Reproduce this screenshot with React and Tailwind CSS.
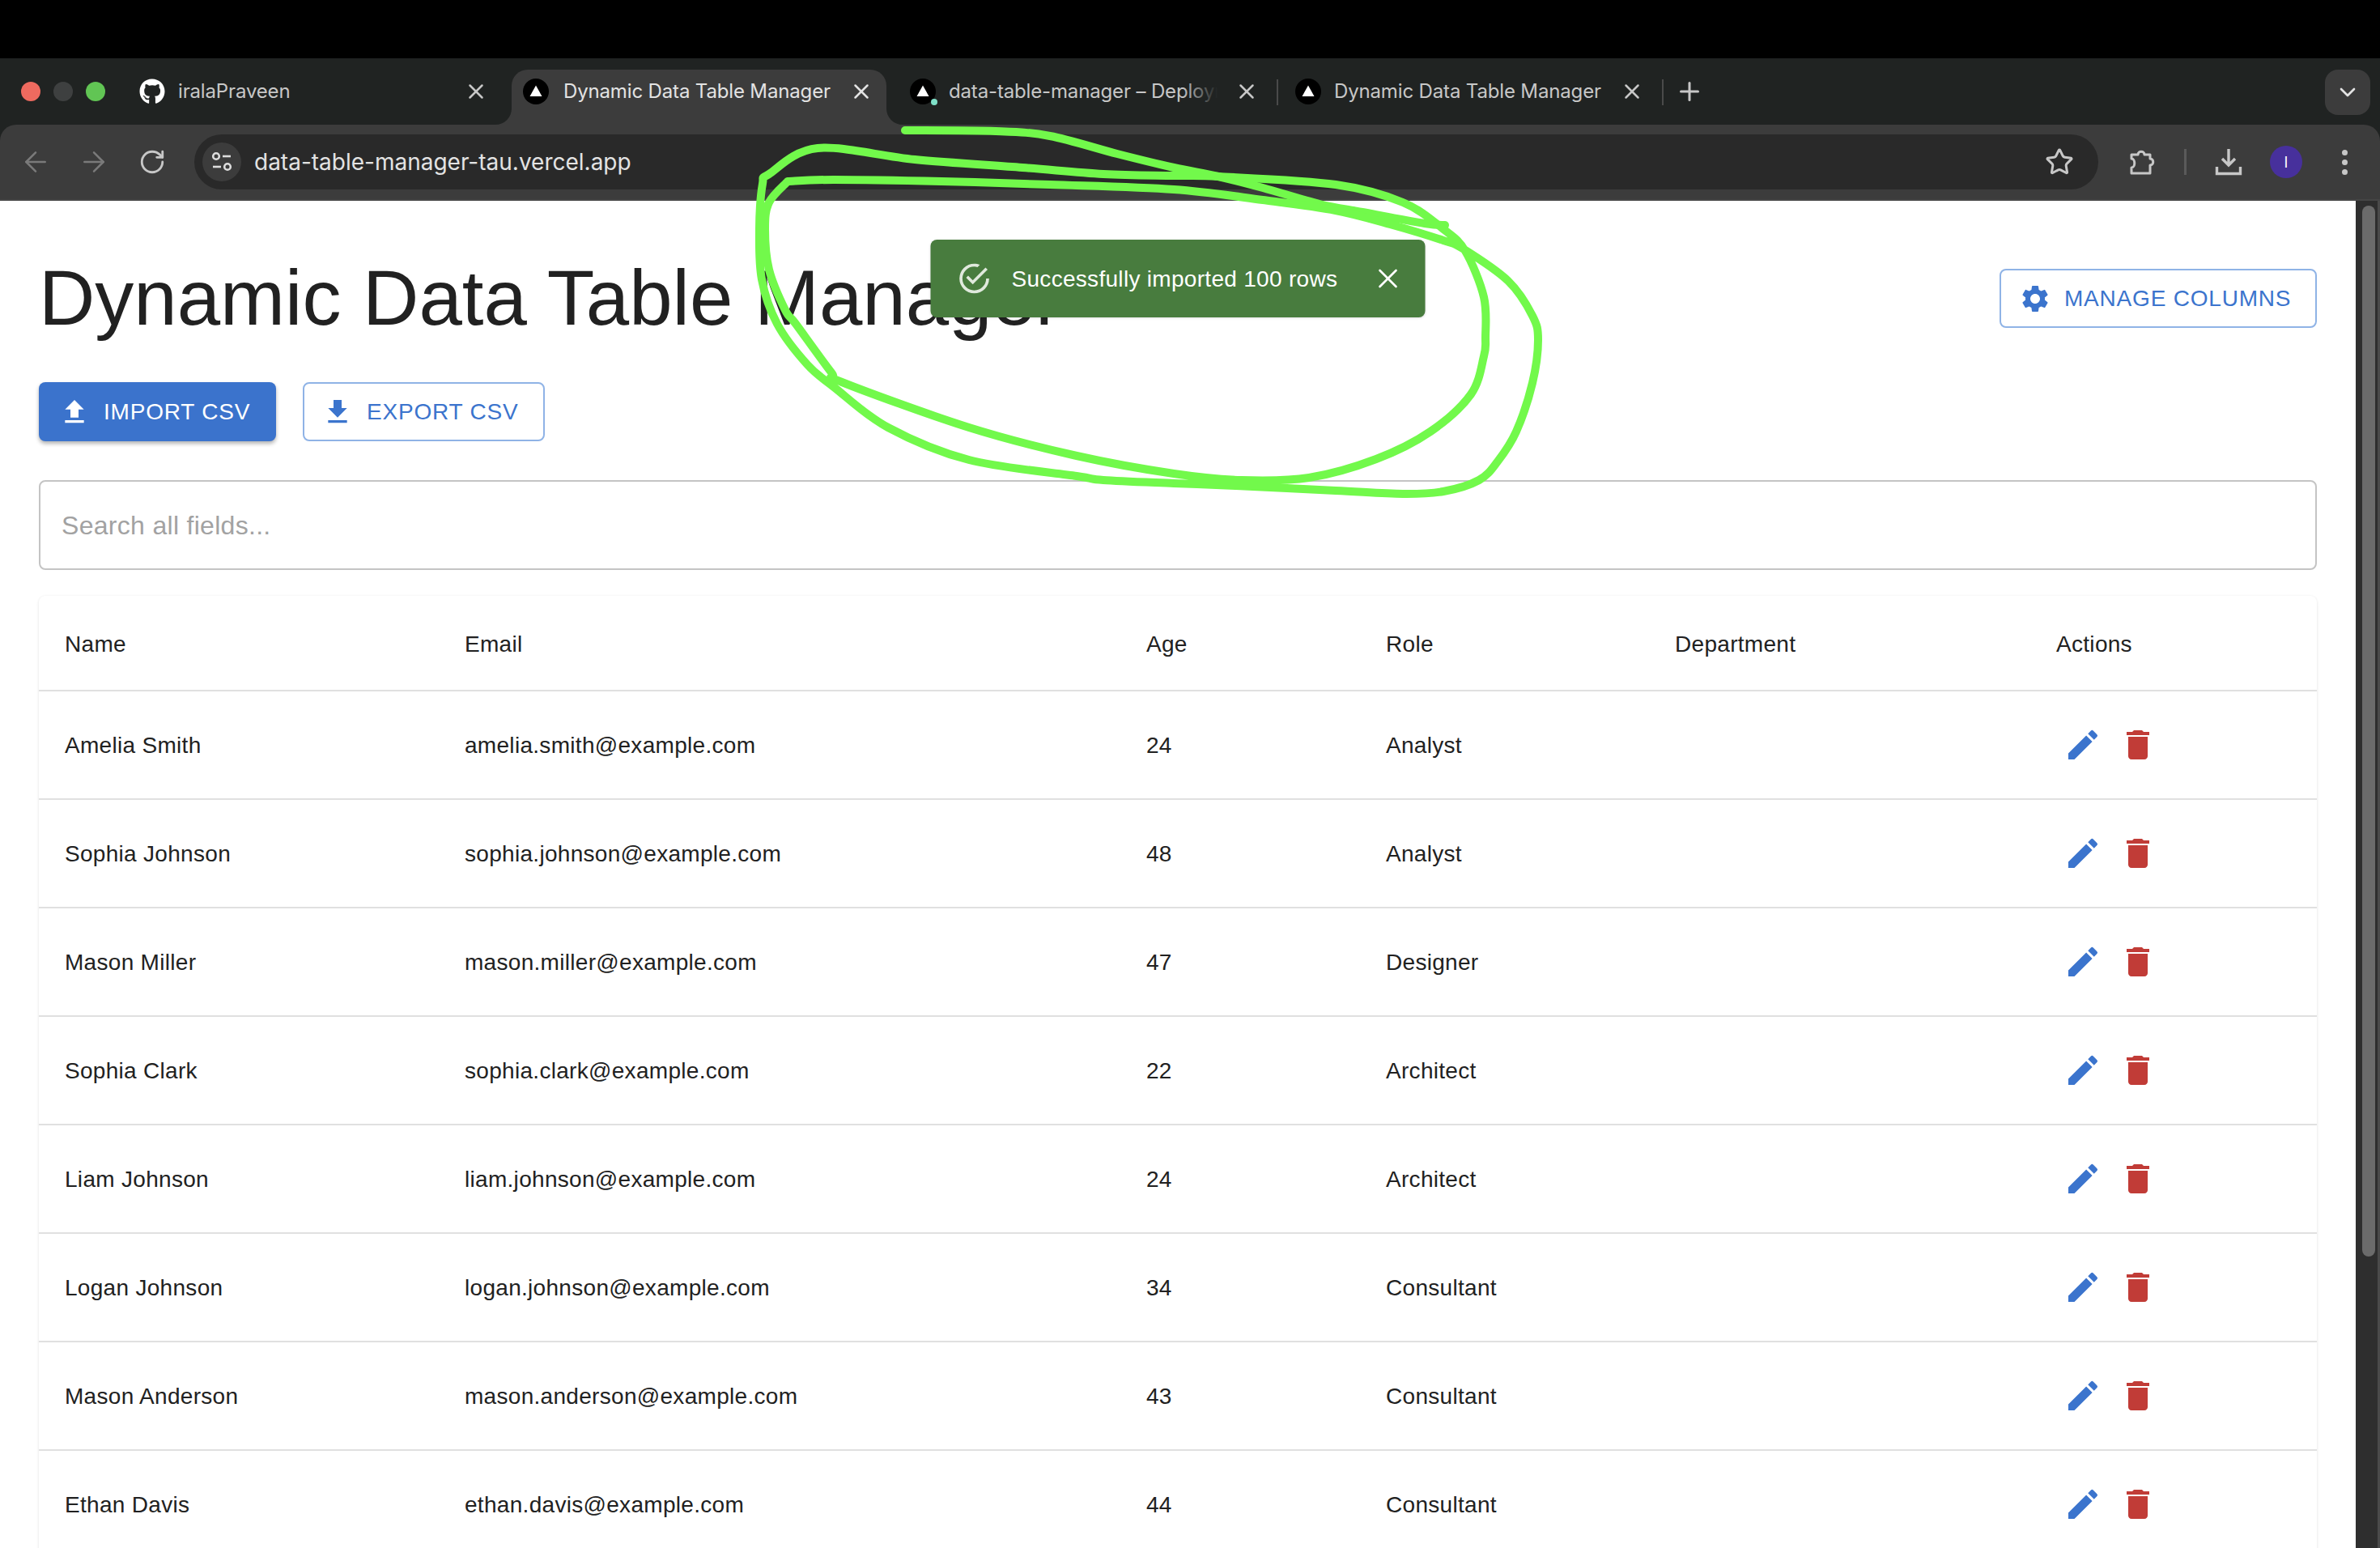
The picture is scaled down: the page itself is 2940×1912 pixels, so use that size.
import { ArrowLeft, ArrowRight, RotateCw, Star, ChevronDown, Plus, X } from "lucide-react";
import { FaGithub } from "react-icons/fa";
import { MdDelete, MdEdit, MdFileDownload, MdFileUpload, MdSettings } from "react-icons/md";

const rows = [
  ["Amelia Smith", "amelia.smith@example.com", "24", "Analyst"],
  ["Sophia Johnson", "sophia.johnson@example.com", "48", "Analyst"],
  ["Mason Miller", "mason.miller@example.com", "47", "Designer"],
  ["Sophia Clark", "sophia.clark@example.com", "22", "Architect"],
  ["Liam Johnson", "liam.johnson@example.com", "24", "Architect"],
  ["Logan Johnson", "logan.johnson@example.com", "34", "Consultant"],
  ["Mason Anderson", "mason.anderson@example.com", "43", "Consultant"],
  ["Ethan Davis", "ethan.davis@example.com", "44", "Consultant"],
];

// hand-drawn highlight, sampled from the picture and smoothed
const tipStroke = [
  [1118, 161], [1230, 162], [1297, 168], [1380, 190], [1450, 207], [1505, 218], [1560, 232],
  [1630, 252], [1683, 262], [1760, 276], [1785, 278],
];
const loopStroke = [
  [973, 224], [1030, 222], [1163, 224], [1297, 228], [1450, 234], [1560, 247], [1650, 260], [1717, 277],
  [1783, 297], [1807, 307], [1863, 347], [1893, 390], [1900, 420], [1893, 473], [1873, 533], [1850, 570],
  [1827, 593], [1783, 607], [1733, 610], [1650, 606], [1527, 600], [1450, 597], [1363, 593], [1330, 588],
  [1197, 568], [1097, 528], [1030, 478], [997, 450], [960, 400], [941, 345], [938, 283], [942, 227],
  [950, 215], [1010, 183], [1130, 197], [1263, 207], [1363, 215], [1450, 217], [1505, 218], [1650, 228],
  [1733, 250], [1783, 283], [1810, 310], [1833, 367], [1835, 417], [1833, 440], [1817, 487], [1767, 533],
  [1700, 567], [1617, 590], [1533, 593], [1450, 585], [1330, 563], [1197, 528], [1040, 472], [1027, 460],
  [983, 400], [970, 383], [950, 333], [945, 283], [950, 250], [973, 224],
];

function smoothPath(pts) {
  let d = `M${pts[0][0]} ${pts[0][1]}`;
  for (let i = 0; i < pts.length - 1; i++) {
    const p0 = pts[i - 1] || pts[i];
    const p1 = pts[i];
    const p2 = pts[i + 1];
    const p3 = pts[i + 2] || p2;
    const c1x = p1[0] + (p2[0] - p0[0]) / 6;
    const c1y = p1[1] + (p2[1] - p0[1]) / 6;
    const c2x = p2[0] - (p3[0] - p1[0]) / 6;
    const c2y = p2[1] - (p3[1] - p1[1]) / 6;
    d += `C${c1x} ${c1y} ${c2x} ${c2y} ${p2[0]} ${p2[1]}`;
  }
  return d;
}

function VercelIcon() {
  return (
    <svg width="32" height="32" viewBox="0 0 32 32" className="shrink-0">
      <circle cx="16" cy="16" r="16" fill="#000" />
      <path d="M16 8.5L23.5 22H8.5Z" fill="#fff" />
    </svg>
  );
}

function Tab({ active, icon, title, fade, className, titleClass }) {
  return (
    <div
      className={`flex items-center h-[68px] pb-[14px] relative shrink-0 ${
        active ? "bg-[#3c3c3c] rounded-t-[20px] text-[#e3e3e3]" : "text-[#c7c7c7]"
      } ${className}`}
    >
      {icon}
      <div className={`overflow-hidden whitespace-nowrap text-[24px] tracking-[-0.15px] leading-[1.3] relative ${titleClass}`}>
        {title}
        {fade && (
          <div className="absolute top-0 bottom-0 right-0 w-[44px] bg-gradient-to-r from-transparent to-[#202322]" />
        )}
      </div>
      <X size={30} strokeWidth={2} className={`shrink-0 ${fade ? "ml-[21px]" : "ml-[-5px]"}`} />
      {active && (
        <>
          <svg width="20" height="20" viewBox="0 0 20 20" fill="#3c3c3c" className="absolute left-[-20px] bottom-0">
            <path d="M20 0V20H0A20 20 0 0 0 20 0Z" />
          </svg>
          <svg width="20" height="20" viewBox="0 0 20 20" fill="#3c3c3c" className="absolute right-[-20px] bottom-0">
            <path d="M0 0V20H20A20 20 0 0 1 0 0Z" />
          </svg>
        </>
      )}
    </div>
  );
}

function ChromeBar() {
  return (
    <div className="font-['Inter',sans-serif] bg-[#202322]">
      <div className="h-[72px] bg-black" />

      {/* tab strip */}
      <div className="h-[82px] flex pt-[14px]">
        <div className="flex items-center h-[54px] pl-[26px] gap-4 w-[158px] shrink-0">
          <div className="w-6 h-6 rounded-full bg-[#ee6a5f]" />
          <div className="w-6 h-6 rounded-full bg-[#3e4040]" />
          <div className="w-6 h-6 rounded-full bg-[#61c554]" />
        </div>
        <Tab
          icon={<FaGithub size={32} className="shrink-0 text-white" />}
          title="iralaPraveen"
          className="w-[474px] pl-[14px]"
          titleClass="ml-[16px] w-[358px]"
        />
        <Tab
          active
          icon={<VercelIcon />}
          title="Dynamic Data Table Manager"
          className="w-[463px] mr-[13px] pl-[14px]"
          titleClass="ml-[18px] w-[358px]"
        />
        <Tab
          fade
          icon={
            <div className="relative shrink-0">
              <VercelIcon />
              <div className="absolute right-[-2px] bottom-[-1px] w-2 h-2 rounded-full bg-[#7fe0c8]" />
            </div>
          }
          title="data-table-manager – Deployment Overview"
          className="w-[469px] pl-[16px]"
          titleClass="ml-[16px] w-[332px]"
        />
        <div className="w-[2px] h-[32px] mt-[12px] bg-[#4a4a4a] shrink-0 mr-[4px]" />
        <Tab
          icon={<VercelIcon />}
          title="Dynamic Data Table Manager"
          className="w-[470px] pl-[17px]"
          titleClass="ml-[16px] w-[358px]"
        />
        <div className="w-[2px] h-[32px] mt-[12px] bg-[#4a4a4a] shrink-0" />
        <Plus size={36} strokeWidth={2} className="text-[#c7c7c7] ml-[14px] mt-[9px]" />
        <div className="ml-auto mr-3 w-14 h-14 rounded-2xl bg-[#3c3c3c] flex items-center justify-center">
          <ChevronDown size={32} strokeWidth={2} className="text-[#e3e3e3]" />
        </div>
      </div>

      {/* toolbar */}
      <div className="h-[92px] bg-[#3c3c3c] rounded-t-[20px] flex items-center pl-2">
        <div className="w-[72px] flex justify-center text-[#7a7a7a]">
          <ArrowLeft size={40} strokeWidth={1.5} />
        </div>
        <div className="w-[72px] flex justify-center text-[#7a7a7a]">
          <ArrowRight size={40} strokeWidth={1.5} />
        </div>
        <div className="w-[72px] flex justify-center text-[#c7c7c7]">
          <RotateCw size={34} strokeWidth={2} />
        </div>
        <div className="ml-4 w-[2352px] h-[68px] rounded-full bg-[#292929] flex items-center pl-[10px] pr-[30px]">
          <div className="w-12 h-12 rounded-full bg-[#3c3c3c] flex items-center justify-center">
            <svg width="28" height="28" viewBox="0 0 28 28" fill="none" stroke="#dcdcdc" strokeWidth="2.6">
              <circle cx="7" cy="7" r="3.8" />
              <path d="M15 7H25" />
              <path d="M3 20H13" />
              <circle cx="21" cy="20" r="3.8" />
            </svg>
          </div>
          <span className="ml-[16px] text-[28px] leading-none text-[#e3e3e3]">data-table-manager-tau.vercel.app</span>
          <Star size={36} strokeWidth={2} className="ml-auto text-[#c7c7c7]" />
        </div>
        <svg width="32" height="34" viewBox="0 0 32 34" fill="none" stroke="#c7c7c7" strokeWidth="3" className="ml-[38px]">
          <path d="M3 8H11C11 3 19 3 19 8H26V13C31 13 31 21 26 21V31H3V24C8 24 8 13 3 13Z" strokeLinejoin="round" />
        </svg>
        <div className="ml-[36px] w-[3px] h-[32px] bg-[#5a5a5a]" />
        <svg width="34" height="34" viewBox="0 0 34 34" fill="none" stroke="#c7c7c7" strokeWidth="3.4" className="ml-[35px]">
          <path d="M17 1V21M9 13L17 21L25 13" />
          <path d="M2.5 23V31.5H31.5V23" />
        </svg>
        <div className="ml-[34px] w-10 h-10 rounded-full bg-[#47309c] flex items-center justify-center text-white text-[18px]">
          I
        </div>
        <div className="ml-[49px] flex flex-col gap-[5px]">
          <div className="w-[7px] h-[7px] rounded-full bg-[#c7c7c7]" />
          <div className="w-[7px] h-[7px] rounded-full bg-[#c7c7c7]" />
          <div className="w-[7px] h-[7px] rounded-full bg-[#c7c7c7]" />
        </div>
      </div>
      <div className="h-[2px] bg-[#454545]" />
    </div>
  );
}

function Toast() {
  return (
    <div className="absolute top-[48px] left-1/2 -translate-x-1/2 w-[611px] h-[96px] rounded-lg bg-[#487c3e] text-white flex items-center pl-[32px] shadow-sm">
      <svg width="44" height="44" viewBox="0 0 24 24" fill="#e0e9dd" className="shrink-0">
        <path d="M20,12A8,8 0 0,1 12,20A8,8 0 0,1 4,12A8,8 0 0,1 12,4C12.76,4 13.5,4.11 14.2,4.31L15.77,2.74C14.61,2.26 13.34,2 12,2A10,10 0 0,0 2,12A10,10 0 0,0 12,22A10,10 0 0,0 22,12M7.91,10.08L6.5,11.5L11,16L21,6L19.59,4.58L11,13.17L7.91,10.08Z" />
      </svg>
      <span className="ml-[24px] pt-[2px] text-[28px] tracking-[0.3px] whitespace-nowrap">Successfully imported 100 rows</span>
      <X size={40} strokeWidth={1.6} className="ml-auto mr-[26px]" />
    </div>
  );
}

const btnBase = "flex items-center h-[73px] rounded-lg text-[28px] tracking-[0.8px] uppercase";
const outlineBtn = `${btnBase} border-2 border-[#8fb3e6] text-[#3b74cd] bg-white`;
const gridCols = "grid grid-cols-[494px_842px_296px_357px_471px_354px]";

function DataTable() {
  return (
    <div className="mt-8 rounded-lg bg-white tracking-[0.3px] shadow-[0_2px_4px_rgba(0,0,0,0.08),0_0_3px_rgba(0,0,0,0.05)]">
      <div className={`${gridCols} h-[118px] items-center border-b-2 border-[#e0e0e0] [&>div]:pl-8 [&>div]:pt-[3px]`}>
        <div>Name</div>
        <div>Email</div>
        <div>Age</div>
        <div>Role</div>
        <div>Department</div>
        <div>Actions</div>
      </div>
      {rows.map((r) => (
        <div key={r[1]} className={`${gridCols} h-[134px] items-center border-b-2 border-[#e0e0e0] [&>div]:pl-8 [&>span]:pl-8`}>
          <div className="pt-[2px]">{r[0]}</div>
          <div className="pt-[2px]">{r[1]}</div>
          <div className="pt-[2px]">{r[2]}</div>
          <div className="pt-[2px]">{r[3]}</div>
          <div />
          <div className="flex">
            <div className="w-[68px] h-[68px] ml-[-1px] flex items-center justify-center text-[#3b74cd]">
              <MdEdit size={48} />
            </div>
            <div className="w-[68px] h-[68px] flex items-center justify-center text-[#c13c37]">
              <MdDelete size={48} />
            </div>
          </div>
        </div>
      ))}
    </div>
  );
}

export default function App() {
  return (
    <div className="w-[2940px] h-[1912px] overflow-hidden relative bg-white">
      <ChromeBar />

      <div className="flex h-[1664px]">
        <main className="w-[2910px] relative px-12 font-['Liberation_Sans',Arial,sans-serif] text-[28px] text-[#212121]">
          <div className="flex items-start justify-between pt-[72px]">
            <h1 className="text-[96px] leading-[1.167] font-normal -mt-[8px]">Dynamic Data Table Manager</h1>
            <button className={`${outlineBtn} h-[72px] pl-[22px] w-[392px] mt-[12px]`}>
              <MdSettings size={40} className="shrink-0" />
              <span className="ml-4">Manage Columns</span>
            </button>
          </div>

          <div className="flex gap-[33px] mt-[48px]">
            <button className={`${btnBase} pl-[24px] w-[293px] bg-[#3b73cc] text-white shadow-[0_3px_5px_rgba(0,0,0,0.3)]`}>
              <MdFileUpload size={40} className="shrink-0" />
              <span className="ml-4">Import CSV</span>
            </button>
            <button className={`${outlineBtn} pl-[21px] w-[299px]`}>
              <MdFileDownload size={40} className="shrink-0" />
              <span className="ml-4">Export CSV</span>
            </button>
          </div>

          <input
            placeholder="Search all fields..."
            className="mt-12 block w-full h-[111px] rounded-lg border-2 border-[#c4c4c4] px-[26px] pt-[2px] text-[32px] tracking-[0.3px] outline-none placeholder:text-[#a2a2a2]"
          />

          <DataTable />
          <Toast />
        </main>

        {/* scrollbar */}
        <div className="w-[30px] bg-[#2e2e2e] border-r-[3px] border-[#4a4a4a] pl-2 pt-[6px]">
          <div className="w-4 h-[1298px] rounded-full bg-[#6b6b6b]" />
        </div>
      </div>

      <svg
        width="2940"
        height="1912"
        viewBox="0 0 2940 1912"
        fill="none"
        stroke="#72f94b"
        strokeWidth="10"
        strokeLinecap="round"
        strokeLinejoin="round"
        className="absolute inset-0 pointer-events-none"
      >
        <path d={smoothPath(tipStroke)} />
        <path d={smoothPath(loopStroke)} />
      </svg>
    </div>
  );
}
